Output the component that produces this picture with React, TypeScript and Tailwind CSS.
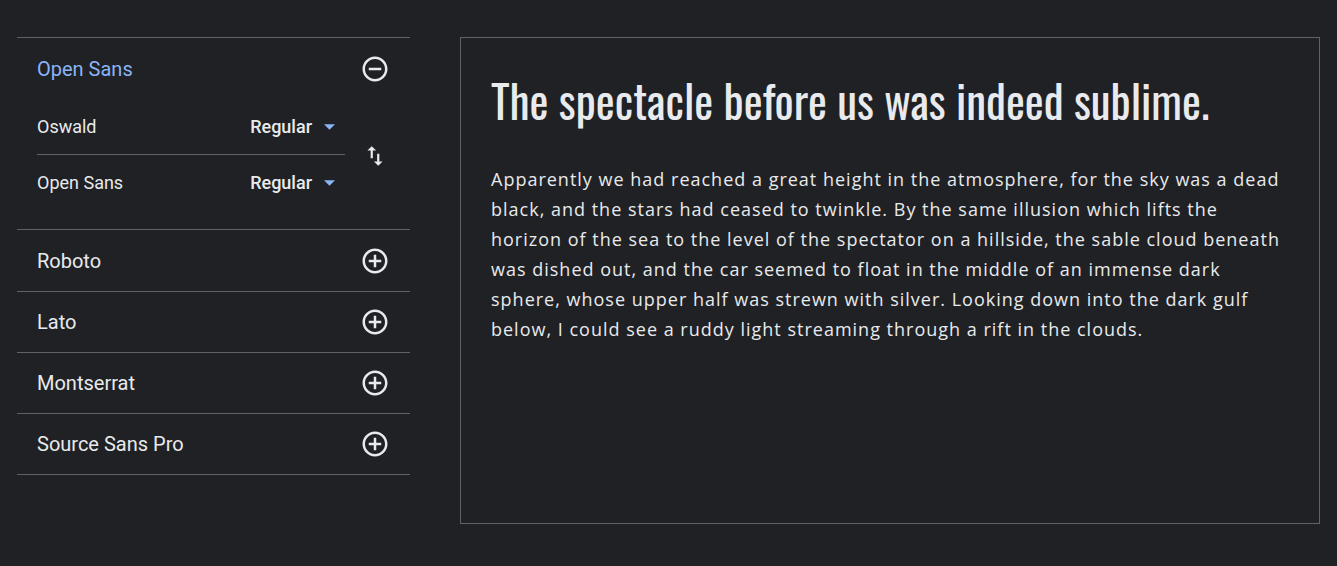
import React from "react";

const ADD =
  "M13 7h-2v4H7v2h4v4h2v-4h4v-2h-4V7zm-1-5C6.48 2 2 6.48 2 12s4.48 10 10 10 10-4.48 10-10S17.52 2 12 2zm0 18c-4.41 0-8-3.59-8-8s3.59-8 8-8 8 3.59 8 8-3.59 8-8 8z";
const REMOVE =
  "M7 11v2h10v-2H7zm5-9C6.48 2 2 6.48 2 12s4.48 10 10 10 10-4.48 10-10S17.52 2 12 2zm0 18c-4.41 0-8-3.59-8-8s3.59-8 8-8 8 3.59 8 8-3.59 8-8 8z";
const SWAP = "M16 17.01V10h-2v7.01h-3L15 21l4-3.99h-3zM9 3L5 6.99h3V14h2V6.99h3L9 3z";

const Icon: React.FC<{ d: string; size: number }> = ({ d, size }) => (
  <svg width={size} height={size} viewBox="0 0 24 24" fill="#e8eaed">
    <path d={d} />
  </svg>
);

const Caret = () => (
  <svg width="11" height="6" viewBox="0 0 10 5" fill="#8ab4f8">
    <path d="M0 0l5 5 5-5z" />
  </svg>
);

const fonts = ["Roboto", "Lato", "Montserrat", "Source Sans Pro"];

const PairRow: React.FC<{ name: string; border?: boolean }> = ({ name, border }) => (
  <div
    className={
      "flex items-center justify-between pr-[10px] " +
      (border ? "h-[56px] border-t border-[#5f6368]" : "h-[55px]")
    }
  >
    <span className="text-[18px] text-[#e8eaed]">{name}</span>
    <div className="flex items-center gap-[12px]">
      <span className="text-[18px] font-medium text-[#e8eaed]">Regular</span>
      <Caret />
    </div>
  </div>
);

export default function App() {
  return (
    <div className="min-h-screen bg-[#202124] flex px-[17px] pt-[37px] font-['Roboto',sans-serif]">
      {/* FONT LIST */}
      <div className="w-[393px] shrink-0">
        <div className="border-t border-[#5f6368] pb-[19px]">
          <div className="h-[61px] flex items-center justify-between pl-[20px] pr-[20px]">
            <span className="text-[20px] text-[#8ab4f8]">Open Sans</span>
            <Icon d={REMOVE} size={30} />
          </div>
          <div className="flex items-center pl-[20px]">
            <div className="w-[308px]">
              <PairRow name="Oswald" />
              <PairRow name="Open Sans" border />
            </div>
            <div className="flex-1 flex justify-center pr-[5px] pt-[2px]">
              <Icon d={SWAP} size={26} />
            </div>
          </div>
        </div>
        {fonts.map((f, i) => (
          <div
            key={f}
            className={
              "border-t border-[#5f6368] flex items-center justify-between pl-[20px] pr-[20px] " +
              (i === 0 ? "h-[62px]" : "h-[61px]")
            }
          >
            <span className="text-[20px] text-[#e8eaed]">{f}</span>
            <Icon d={ADD} size={30} />
          </div>
        ))}
        <div className="border-t border-[#5f6368]" />
      </div>

      {/* PREVIEW */}
      <div className="ml-[50px] flex-1 h-[487px] border border-[#5f6368] px-[30px] pt-[32px]">
        <h1 className="font-['Oswald','Liberation_Sans_Narrow','DejaVu_Sans_Condensed',sans-serif] [font-stretch:condensed] text-[45px] leading-[60px] text-[#e8eaed]">
          The spectacle before us was indeed sublime.
        </h1>
        <p className="mt-[34px] font-['Open_Sans',sans-serif] text-[18px] tracking-[1px] leading-[30px] text-[#e8eaed]">
          Apparently we had reached a great height in the atmosphere, for the sky was a dead black, and the
          stars had ceased to twinkle. By the same illusion which lifts the horizon of the sea to the level of
          the spectator on a hillside, the sable cloud beneath was dished out, and the car seemed to float in
          the middle of an immense dark sphere, whose upper half was strewn with silver. Looking down into the
          dark gulf below, I could see a ruddy light streaming through a rift in the clouds.
        </p>
      </div>
    </div>
  );
}
